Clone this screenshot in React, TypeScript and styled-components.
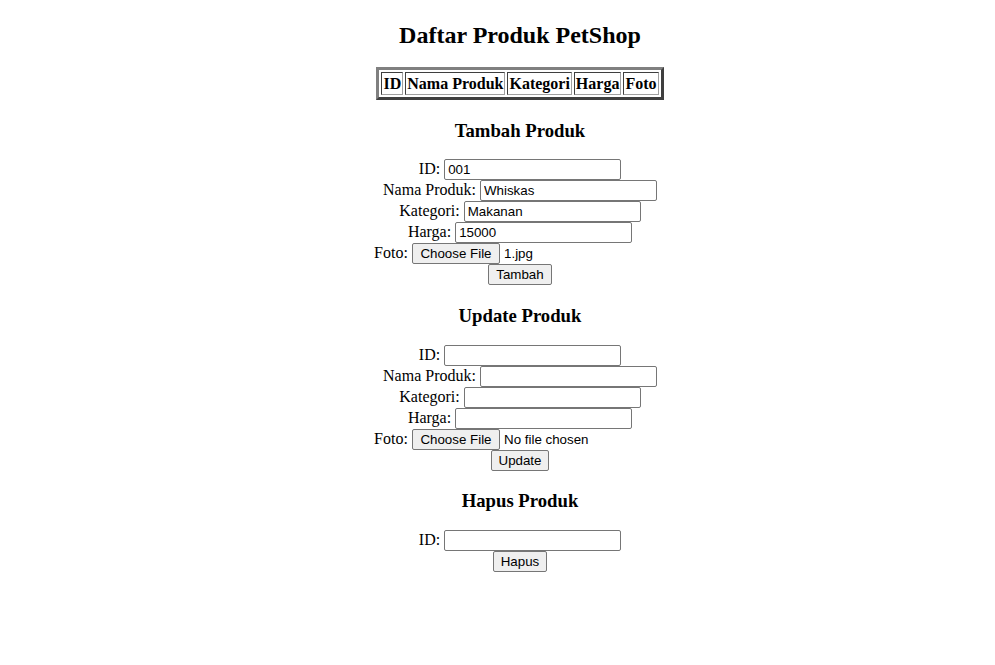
import React from "react";
import styled, { createGlobalStyle } from "styled-components";

const GlobalStyle = createGlobalStyle`
  html, body {
    margin: 0;
    padding: 0;
    background: #ffffff;
  }
  body {
    font-family: "Liberation Serif", "Times New Roman", serif;
    font-size: 16px;
    color: #000000;
  }
`;

const Page = styled.div`
  padding: 0 8px 8px 53px;
  text-align: center;
`;

const Title = styled.h2`
  font-family: "Liberation Serif", serif;
  font-size: 24px;
  font-weight: bold;
  margin: 22px 0 18px;
  line-height: normal;
`;

const ProductTable = styled.table`
  margin: 0 auto;
  border-collapse: separate;
  border-spacing: 2px;
  border-width: 3px;
  border-style: solid;
  border-color: #808080 #3f3f3f #3f3f3f #808080;
`;

const HeadCell = styled.th`
  font-family: "Liberation Serif", serif;
  font-size: 16px;
  font-weight: bold;
  padding: 2px 1px 1px;
  border-width: 1px;
  border-style: solid;
  border-color: #3f3f3f #a0a0a0 #a0a0a0 #3f3f3f;
`;

const SectionTitle = styled.h3`
  font-family: "Liberation Serif", serif;
  font-size: 18.72px;
  font-weight: bold;
  margin: 19.7px 0 17.7px;
  line-height: normal;
`;

const Form = styled.form`
  margin: 0;
`;

const FormLine = styled.div`
  text-align: center;
`;

const Label = styled.label`
  font-family: "Liberation Serif", serif;
  font-size: 16px;
`;

const TextInput = styled.input`
  box-sizing: border-box;
  width: 177px;
  height: 21px;
  padding: 1px 3px;
  border: 1px solid #767676;
  border-radius: 2px;
  background: #ffffff;
  font-family: "Liberation Sans", Arial, sans-serif;
  font-size: 13.333px;
  color: #000000;
  vertical-align: baseline;
  outline: none;
`;

const Button = styled.button`
  box-sizing: border-box;
  height: 21px;
  padding: 1px 7px;
  border: 1px solid #767676;
  border-radius: 2px;
  background: #efefef;
  font-family: "Liberation Sans", Arial, sans-serif;
  font-size: 13.333px;
  color: #000000;
  vertical-align: baseline;
  cursor: default;
`;

const FileBox = styled.span`
  display: inline-block;
  width: 254px;
  text-align: left;
  white-space: nowrap;
  vertical-align: baseline;
`;

const FileButton = styled(Button)`
  padding: 1px 7.5px;
  margin-right: 4px;
`;

const FileName = styled.span`
  font-family: "Liberation Sans", Arial, sans-serif;
  font-size: 13.333px;
`;

type Field = { label: string; value?: string };

const TextLine: React.FC<Field> = ({ label, value }) => (
  <FormLine>
    <Label>{label}: </Label>
    <TextInput type="text" defaultValue={value ?? ""} />
  </FormLine>
);

const FileLine: React.FC<{ fileName: string }> = ({ fileName }) => (
  <FormLine>
    <Label>Foto: </Label>
    <FileBox>
      <FileButton type="button">Choose File</FileButton>
      <FileName>{fileName}</FileName>
    </FileBox>
  </FormLine>
);

const columns = ["ID", "Nama Produk", "Kategori", "Harga", "Foto"];

export default function App() {
  return (
    <>
      <GlobalStyle />
      <Page>
        <Title>Daftar Produk PetShop</Title>
        <ProductTable>
          <thead>
            <tr>
              {columns.map((c) => (
                <HeadCell key={c}>{c}</HeadCell>
              ))}
            </tr>
          </thead>
        </ProductTable>

        <SectionTitle>Tambah Produk</SectionTitle>
        <Form onSubmit={(e) => e.preventDefault()}>
          <TextLine label="ID" value="001" />
          <TextLine label="Nama Produk" value="Whiskas" />
          <TextLine label="Kategori" value="Makanan" />
          <TextLine label="Harga" value="15000" />
          <FileLine fileName="1.jpg" />
          <FormLine>
            <Button type="submit">Tambah</Button>
          </FormLine>
        </Form>

        <SectionTitle>Update Produk</SectionTitle>
        <Form onSubmit={(e) => e.preventDefault()}>
          <TextLine label="ID" />
          <TextLine label="Nama Produk" />
          <TextLine label="Kategori" />
          <TextLine label="Harga" />
          <FileLine fileName="No file chosen" />
          <FormLine>
            <Button type="submit">Update</Button>
          </FormLine>
        </Form>

        <SectionTitle>Hapus Produk</SectionTitle>
        <Form onSubmit={(e) => e.preventDefault()}>
          <TextLine label="ID" />
          <FormLine>
            <Button type="submit">Hapus</Button>
          </FormLine>
        </Form>
      </Page>
    </>
  );
}
